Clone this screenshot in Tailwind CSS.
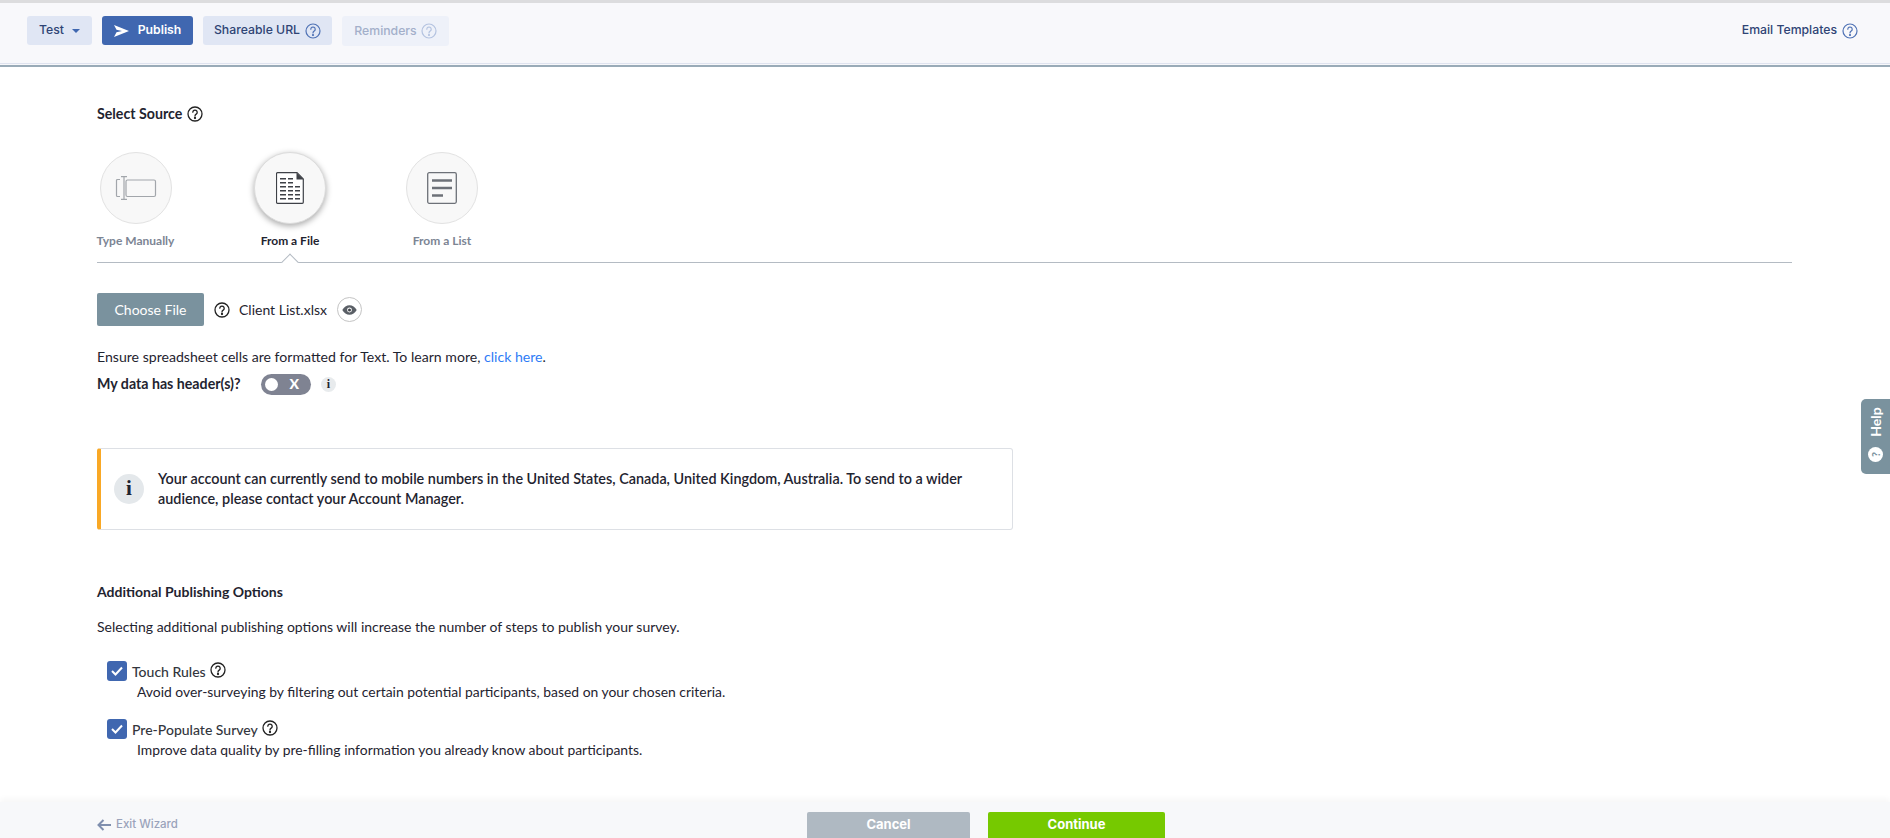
<!DOCTYPE html>
<html lang="en">
<head>
<meta charset="utf-8">
<title>Publish</title>
<script src="https://cdn.jsdelivr.net/npm/@tailwindcss/browser@4"></script>
</head>
<body class="bg-white">
<div class="relative h-[838px] w-[1890px] overflow-hidden flex flex-col font-['Lato','Open_Sans',sans-serif] text-[#1f2430]">

    <!-- Top bar -->
    <div class="h-[3px] bg-[#dcdcde]"></div>
    <div class="h-[61px] bg-[#f8f8fb] border-b border-[#dfe3ef] flex items-start justify-between pl-[27px] pr-[27px] pt-[13px] font-['Inter',sans-serif]">
        <div class="flex items-start gap-[10px] text-[12.25px] font-medium">
            <button class="h-[29px] w-[65px] bg-[#e0e6f4] rounded-[3px] flex items-center justify-center gap-[8px] text-[#2f4475]">
                Test
                <span class="w-0 h-0 border-x-[4px] border-x-transparent border-t-[4px] border-t-[#3f67b0]"></span>
            </button>
            <button class="h-[29px] w-[91px] bg-[#4067b0] rounded-[3px] flex items-center justify-center gap-[9px] text-white font-semibold">
                <svg width="15" height="12" viewBox="0 0 15 12"><path d="M0 0 L15 6 L0 12 L2.5 7.2 L8 6 L2.5 4.8 Z" fill="#fff"/></svg>
                Publish
            </button>
            <button class="h-[29px] w-[129px] bg-[#e0e6f4] rounded-[3px] flex items-center justify-center gap-[5px] text-[#2f4475]">
                Shareable URL
                <svg width="16" height="16" viewBox="0 0 16 16" fill="none" stroke="#4f72b5" stroke-width="1.2"><circle cx="8" cy="8" r="7"/><path d="M5.8 6.2a2.2 2.2 0 1 1 3.4 1.9c-.8.5-1.2.9-1.2 1.9" stroke-linecap="round"/><circle cx="8" cy="12" r=".5" fill="#4f72b5"/></svg>
            </button>
            <button class="h-[30px] w-[107px] bg-[#eef1f9] rounded-[3px] flex items-center justify-center gap-[4px] text-[#a3afca]">
                Reminders
                <svg width="16" height="16" viewBox="0 0 16 16" fill="none" stroke="#b4c3e0" stroke-width="1.2"><circle cx="8" cy="8" r="7"/><path d="M5.8 6.2a2.2 2.2 0 1 1 3.4 1.9c-.8.5-1.2.9-1.2 1.9" stroke-linecap="round"/><circle cx="8" cy="12" r=".5" fill="#b4c3e0"/></svg>
            </button>
        </div>
        <div class="flex items-center gap-[5px] h-[29px] text-[12.25px] font-medium text-[#2f4475] mr-[5px]">
            Email Templates
            <svg width="16" height="16" viewBox="0 0 16 16" fill="none" stroke="#4f72b5" stroke-width="1.2"><circle cx="8" cy="8" r="7"/><path d="M5.8 6.2a2.2 2.2 0 1 1 3.4 1.9c-.8.5-1.2.9-1.2 1.9" stroke-linecap="round"/><circle cx="8" cy="12" r=".5" fill="#4f72b5"/></svg>
        </div>
    </div>
    <div class="h-[3px] bg-[#f8f8fb] border-b-2 border-[#9aabb8]"></div>

    <!-- Main -->
    <div class="flex-1 pl-[97px] pr-[98px]">
        <div class="mt-[37px] flex items-center gap-[5px] h-[20px] text-[14.2px] font-bold">
            Select Source
            <svg width="16" height="16" viewBox="0 0 16 16" fill="none" stroke="#222" stroke-width="1.3"><circle cx="8" cy="8" r="7"/><path d="M5.8 6.2a2.2 2.2 0 1 1 3.4 1.9c-.8.5-1.2.9-1.2 1.9" stroke-linecap="round"/><circle cx="8" cy="12" r=".5" fill="#222"/></svg>
        </div>

        <div class="relative mt-[28px] h-[111px] border-b border-[#b4bbc3] flex text-[12px] font-bold">
            <div class="w-[77px] flex flex-col items-center text-[#7c8594]">
                <div class="ml-[1px] w-[72px] h-[72px] rounded-full bg-[#f8f8f8] border border-[#e2e2e2] flex items-center justify-center">
                    <svg width="42" height="24" viewBox="0 0 42 24" fill="none" stroke="#a2a6ab" stroke-width="1.2"><path d="M5 3.5H2.5a1 1 0 0 0-1 1v15a1 1 0 0 0 1 1H5"/><rect x="11" y="4" width="29.5" height="16.5" rx="1.5"/><path d="M6 .7h6M6 23.3h6M9 .7v22.6"/></svg>
                </div>
                <span class="mt-[8px] whitespace-nowrap">Type Manually</span>
            </div>
            <div class="ml-[80px] w-[72px] flex flex-col items-center">
                <div class="w-[72px] h-[72px] rounded-full bg-[#f8f8f8] border border-[#dcdcdc] shadow-[0_2px_6px_rgba(0,0,0,0.35)] flex items-center justify-center">
                    <svg width="28" height="32" viewBox="0 0 28 32"><path d="M1.5.7H21L27.3 7v23.3a1 1 0 0 1-1 1H1.5a1 1 0 0 1-1-1V1.7a1 1 0 0 1 1-1Z" fill="#fff" stroke="#3e4147" stroke-width="1.2"/><path d="M20.5.7 27.3 7.5H20.5Z" fill="#3e4147"/><path d="M4 6h6v1.6H4zM12 6h5v1.6h-5zM4 10h6v1.6H4zM12 10h5v1.6h-5zM4 14h6v1.6H4zM12 14h5v1.6h-5zM19 14h5v1.6h-5zM4 18h6v1.6H4zM12 18h5v1.6h-5zM19 18h5v1.6h-5zM4 22h6v1.6H4zM12 22h5v1.6h-5zM19 22h5v1.6h-5zM4 26h6v1.6H4zM12 26h5v1.6h-5zM19 26h5v1.6h-5z" fill="#3e4147"/></svg>
                </div>
                <span class="mt-[8px] whitespace-nowrap text-[#1f2430]">From a File</span>
            </div>
            <div class="ml-[80px] w-[72px] flex flex-col items-center text-[#7c8594]">
                <div class="w-[72px] h-[72px] rounded-full bg-[#f8f8f8] border border-[#e2e2e2] flex items-center justify-center">
                    <svg width="30" height="32" viewBox="0 0 30 32" fill="none"><rect x=".7" y=".7" width="28.6" height="30.6" rx="1.5" stroke="#6d7178" stroke-width="1.3"/><path d="M5 8.500h20M5 16h20M5 23.500h11" stroke="#6d7178" stroke-width="2.4"/></svg>
                </div>
                <span class="mt-[8px] whitespace-nowrap">From a List</span>
            </div>
            <!-- notch under the selected tab -->
            <div class="absolute left-[187px] bottom-[-6px] w-[12px] h-[12px] rotate-45 bg-white border-l border-t border-[#b4bbc3]"></div>
        </div>

        <div class="mt-[30px] flex items-center h-[33px]">
            <button class="w-[107px] h-[33px] bg-[#7a929e] rounded-[2px] text-white text-[14px]">Choose File</button>
            <svg class="ml-[10px]" width="16" height="16" viewBox="0 0 16 16" fill="none" stroke="#222" stroke-width="1.3"><circle cx="8" cy="8" r="7"/><path d="M5.8 6.2a2.2 2.2 0 1 1 3.4 1.9c-.8.5-1.2.9-1.2 1.9" stroke-linecap="round"/><circle cx="8" cy="12" r=".5" fill="#222"/></svg>
            <span class="ml-[9px] text-[14px]">Client List.xlsx</span>
            <span class="ml-[10px] w-[25px] h-[25px] rounded-full border border-[#c4c4c4] flex items-center justify-center">
                <svg width="15" height="10" viewBox="0 0 15 10"><path d="M.3 5C2 2 4.600.3 7.500.3S13 2 14.700 5C13 8 10.400 9.700 7.500 9.700S2 8 .3 5Z" fill="#5a5f66"/><circle cx="7.500" cy="5" r="2.400" fill="#fff"/><circle cx="7.500" cy="5" r="1.500" fill="#3f4349"/></svg>
            </span>
        </div>

        <p class="mt-[21px] text-[14.1px] leading-[20px]">Ensure spreadsheet cells are formatted for Text. To learn more, <a class="text-[#2f7cf6]">click here</a>.</p>
        <div class="mt-[6px] flex items-center h-[22px]">
            <span class="text-[14.2px] font-bold w-[164px]">My data has header(s)?</span>
            <span class="w-[50px] h-[21px] rounded-full bg-[#7f8392] flex items-center justify-between pl-[4px] pr-[12px]">
                <span class="w-[13px] h-[13px] rounded-full bg-white"></span>
                <span class="text-white text-[14px] font-black leading-none">X</span>
            </span>
            <span class="ml-[10px] w-[15px] h-[15px] rounded-full bg-[#e8ebed] flex items-center justify-center text-[12px] font-bold font-['Liberation_Serif',serif]">i</span>
        </div>

        <div class="mt-[53px] w-[916px] h-[82px] border border-[#dde0e5] border-l-4 border-l-[#f9a825] rounded-[3px] flex items-center pl-[13px]">
            <span class="w-[30px] h-[30px] rounded-full bg-[#e4e8eb] flex items-center justify-center text-[21px] font-bold font-['Liberation_Serif',serif] shrink-0">i</span>
            <p class="ml-[14px] text-[14.4px] font-semibold leading-[20px] w-[830px]">Your account can currently send to mobile numbers in the United States, Canada, United Kingdom, Australia. To send to a wider audience, please contact your Account Manager.</p>
        </div>

        <h3 class="mt-[52px] text-[14px] font-bold leading-[20px]">Additional Publishing Options</h3>
        <p class="mt-[15px] text-[14px] leading-[20px]">Selecting additional publishing options will increase the number of steps to publish your survey.</p>

        <div class="mt-[24px] ml-[10px] flex flex-col gap-[17px]">
            <div>
                <div class="flex items-center h-[20px]">
                    <span class="w-[20px] h-[20px] rounded-[3px] bg-[#4067b0] flex items-center justify-center"><svg width="12" height="10" viewBox="0 0 12 10" fill="none" stroke="#fff" stroke-width="2"><path d="M1 5l3.500 3.500L11 1.500"/></svg></span>
                    <span class="ml-[5px] text-[14px] font-medium text-[#33363d]">Touch Rules</span>
                    <svg class="ml-[4px] -mt-[2px]" width="16" height="16" viewBox="0 0 16 16" fill="none" stroke="#222" stroke-width="1.3"><circle cx="8" cy="8" r="7"/><path d="M5.8 6.2a2.2 2.2 0 1 1 3.4 1.9c-.8.5-1.2.9-1.2 1.9" stroke-linecap="round"/><circle cx="8" cy="12" r=".5" fill="#222"/></svg>
                </div>
                <p class="ml-[30px] mt-[1px] text-[13.9px] leading-[20px]">Avoid over-surveying by filtering out certain potential participants, based on your chosen criteria.</p>
            </div>
            <div>
                <div class="flex items-center h-[20px]">
                    <span class="w-[20px] h-[20px] rounded-[3px] bg-[#4067b0] flex items-center justify-center"><svg width="12" height="10" viewBox="0 0 12 10" fill="none" stroke="#fff" stroke-width="2"><path d="M1 5l3.500 3.500L11 1.500"/></svg></span>
                    <span class="ml-[5px] text-[14px] font-medium text-[#33363d]">Pre-Populate Survey</span>
                    <svg class="ml-[4px] -mt-[2px]" width="16" height="16" viewBox="0 0 16 16" fill="none" stroke="#222" stroke-width="1.3"><circle cx="8" cy="8" r="7"/><path d="M5.8 6.2a2.2 2.2 0 1 1 3.4 1.9c-.8.5-1.2.9-1.2 1.9" stroke-linecap="round"/><circle cx="8" cy="12" r=".5" fill="#222"/></svg>
                </div>
                <p class="ml-[30px] mt-[1px] text-[13.9px] leading-[20px]">Improve data quality by pre-filling information you already know about participants.</p>
            </div>
        </div>
    </div>

    <!-- Footer -->
    <div class="h-[36px] bg-[#f7f8fa] shadow-[0_-3px_6px_rgba(0,0,0,0.04)] relative flex items-start pl-[97px] pt-[10px] font-['Inter',sans-serif]">
        <div class="flex items-center gap-[5px] w-[710px] h-[26px] text-[11.5px] text-[#9aa3bb] font-medium">
            <svg width="14" height="12" viewBox="0 0 14 12" fill="none" stroke="#7f8fae" stroke-width="2"><path d="M14 6H2M6.500 1 1.500 6l5 5"/></svg>
            Exit Wizard
        </div>
        <button class="w-[163px] h-[26px] bg-[#afb9c2] rounded-t-[2px] text-white text-[13px] font-bold">Cancel</button>
        <button class="ml-[18px] w-[177px] h-[26px] bg-[#76c900] rounded-t-[2px] text-white text-[13px] font-bold">Continue</button>
    </div>

    <!-- Help tab -->
    <div class="absolute right-0 top-[399px] w-[29px] h-[75px] bg-[#7a929e] rounded-l-[5px] flex flex-col items-center justify-center gap-[6px]">
        <span class="-rotate-90 text-white text-[14px] font-bold leading-none mt-[3px] mb-[12px]">Help</span>
        <span class="w-[15px] h-[15px] rounded-full bg-white text-[#7a929e] text-[11px] font-bold leading-[15px] text-center -rotate-90">?</span>
    </div>
</div>
</body>
</html>
